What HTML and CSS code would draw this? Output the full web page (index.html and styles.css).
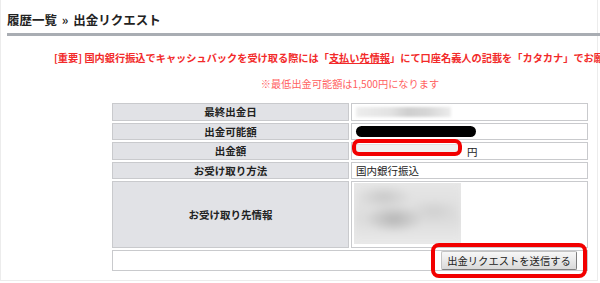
FILE: index.html
```html
<!DOCTYPE html>
<html lang="ja">
<head>
<meta charset="utf-8">
<title>出金リクエスト</title>
<link rel="stylesheet" href="styles.css">
</head>
<body>
<div class="page">
  <h1 class="title">履歴一覧 <span class="crumb-sep">»</span> 出金リクエスト</h1>
  <div class="rule"></div>
  <div class="content">
    <p class="notice">[重要] 国内銀行振込でキャッシュバックを受け取る際には「<a class="notice-link" href="#">支払い先情報</a>」にて口座名義人の記載を「カタカナ」でお願いします。</p>
    <p class="notice-sub">※最低出金可能額は1,500円になります</p>
    <table class="form-table">
      <colgroup><col class="col-half"><col class="col-half"></colgroup>
      <tr>
        <th class="label">最終出金日</th>
        <td class="value"><div class="blur-line"></div></td>
      </tr>
      <tr>
        <th class="label">出金可能額</th>
        <td class="value"><div class="mask-pill"></div></td>
      </tr>
      <tr>
        <th class="label">出金額</th>
        <td class="value">
          <div class="amount">
            <span class="amount-input"><span class="input-box"></span></span>
            <span class="yen">円</span>
          </div>
        </td>
      </tr>
      <tr>
        <th class="label">お受け取り方法</th>
        <td class="value">国内銀行振込</td>
      </tr>
      <tr>
        <th class="label label-tall">お受け取り先情報</th>
        <td class="value value-tall"><div class="blur-block"><div class="blur-inner"></div></div></td>
      </tr>
      <tr>
        <td class="submit-cell" colspan="2">
          <span class="submit-wrap"><button class="submit" type="button">出金リクエストを送信する</button></span>
        </td>
      </tr>
    </table>
  </div>
</div>
</body>
</html>
```

FILE: styles.css
```css
html, body {
  margin: 0;
  padding: 0;
  overflow: hidden;
  background: #fff;
}

body {
  font-family: "Noto Sans CJK JP", "Noto Sans", sans-serif;
  color: #222;
}

.page {
  width: 596px;
  border: 1px solid #ececec;
  border-top: none;
  padding-top: 10.5px;
  box-sizing: content-box;
  height: 269.5px;
}

.title {
  margin: 0 0 0 6px;
  font-size: 12.5px;
  font-weight: 700;
  line-height: 17px;
  color: #222;
  white-space: nowrap;
}

.crumb-sep {
  margin: 0 2px;
}

.rule {
  margin: 5.5px 0 0 6px;
  width: 594px;
  height: 3px;
  background: #a9adb3;
}

.content {
  width: 686px;
  margin-left: 6px;
}

.notice {
  margin: 15px 0 0 0;
  padding-left: 47px;
  font-size: 10.2px;
  line-height: 14px;
  font-weight: 700;
  color: #f22a2a;
  white-space: nowrap;
}

.notice-link {
  color: #f22a2a;
  text-decoration: underline;
}

.notice-sub {
  margin: 12px 0 0 0;
  text-align: center;
  font-size: 10.2px;
  line-height: 14px;
  color: #ff5f5f;
  white-space: nowrap;
}

.form-table {
  margin: 10.3px auto 0;
  width: 480px;
  table-layout: fixed;
  border-collapse: separate;
  border-spacing: 2px;
  font-size: 10.5px;
}

.col-half {
  width: 50%;
}

.label,
.value,
.submit-cell {
  box-sizing: border-box;
  height: 17.5px;
  line-height: 14px;
  padding: 0 4px;
  border: 1px solid #c9cacd;
}

.label {
  background: #e1e2e6;
  font-weight: 700;
  text-align: center;
  color: #222;
}

.value {
  background: #fff;
  text-align: left;
  color: #222;
}

.label-tall,
.value-tall {
  height: 66.7px;
}

.value-tall {
  vertical-align: top;
  padding-top: 1px;
}

.blur-line {
  width: 95px;
  height: 10px;
  background: linear-gradient(to right, #ededed 0%, #e3e3e3 35%, #cfcfcf 55%, #d6d6d6 75%, #ececec 100%);
  filter: blur(1.5px);
}

.mask-pill {
  width: 120px;
  height: 11.5px;
  border-radius: 6px;
  background: #000;
}

.amount {
  display: flex;
  align-items: center;
  gap: 7px;
}

.amount-input {
  position: relative;
  display: block;
  margin-bottom: 3px;
}

.input-box {
  display: block;
  box-sizing: border-box;
  width: 104px;
  height: 11px;
  background: #f0f0f0;
  border: 1px solid #e2e2e2;
}

.amount-input::after {
  content: "";
  position: absolute;
  left: -4px;
  right: -2px;
  top: -5px;
  bottom: -1px;
  border: 4px solid #f20000;
  border-radius: 7px;
}

.yen {
  line-height: 14px;
  margin-top: 1px;
}

.blur-block {
  width: 107px;
  height: 61px;
  overflow: hidden;
  background: #e8e8e8;
  margin-left: -2px;
}

.blur-inner {
  width: 100%;
  height: 100%;
  background:
    radial-gradient(ellipse 30px 14px at 40px 36px, #b5b5b5 0%, rgba(190,190,190,0) 100%),
    radial-gradient(ellipse 28px 12px at 30px 14px, #c8c8c8 0%, rgba(210,210,210,0) 100%),
    radial-gradient(ellipse 26px 12px at 80px 28px, #d0d0d0 0%, rgba(220,220,220,0) 100%),
    linear-gradient(to bottom, #e6e6e6, #dcdcdc 60%, #eaeaea);
  filter: blur(3px);
}

.submit-cell {
  height: 20.7px;
  padding: 0 10px 0 4px;
  background: #fff;
  text-align: right;
  vertical-align: middle;
}

.submit-wrap {
  position: relative;
  display: inline-block;
  vertical-align: middle;
}

.submit {
  display: block;
  box-sizing: border-box;
  width: 136px;
  height: 19px;
  padding: 0;
  font-family: "Noto Sans CJK JP", "Noto Sans", sans-serif;
  font-size: 10.3px;
  line-height: 17px;
  color: #222;
  background: linear-gradient(to bottom, #f7f7f7 0%, #e9e9e9 50%, #d9d9d9 100%);
  border: 1px solid;
  border-color: #c4c4c4 #7d7d7d #7d7d7d #c4c4c4;
  border-radius: 2px;
}

.submit-wrap::after {
  content: "";
  position: absolute;
  left: -10px;
  right: -10px;
  top: -8px;
  bottom: -8px;
  border: 4.5px solid #f20000;
  border-radius: 8px;
}
```
